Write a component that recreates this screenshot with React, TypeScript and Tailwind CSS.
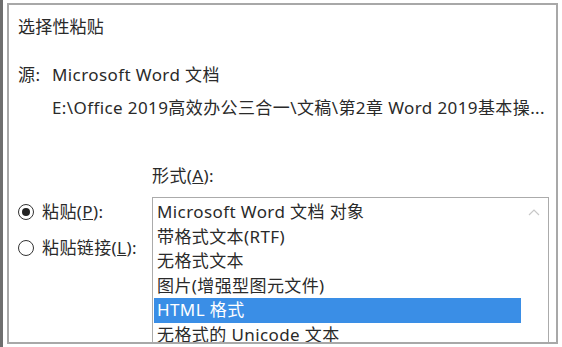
const font = { fontFamily: '"Noto Sans", "Noto Sans CJK SC", sans-serif' };

const formats = [
  'Microsoft Word 文档 对象',
  '带格式文本(RTF)',
  '无格式文本',
  '图片(增强型图元文件)',
  'HTML 格式',
  '无格式的 Unicode 文本',
];

function Radio({ checked, label, hotkey }: { checked: boolean; label: string; hotkey: string }) {
  return (
    <div className="flex items-center gap-[8px]">
      <span className="flex h-[16px] w-[16px] items-center justify-center rounded-full border border-[#333]">
        {checked ? <span className="h-[8px] w-[8px] rounded-full bg-[#222]" /> : null}
      </span>
      <span>
        {label}(<span className="underline">{hotkey}</span>):
      </span>
    </div>
  );
}

export default function App() {
  return (
    <div
      className="flex h-[347px] w-[562px] overflow-hidden border-l-[3px] border-[#6e6e6e] bg-white pb-[3px] pl-[4px] pr-[4px] pt-[3px] text-[17px] tracking-[0.4px] text-[#2a2a2a]"
      style={font}
    >
      <div className="flex flex-1 flex-col overflow-hidden border-2 border-[#a8a8a8] pl-[9px] pr-[6px]">
        <div className="mt-[11px] leading-[22px] tracking-[0.2px]">选择性粘贴</div>

        <div className="mt-[26px] flex leading-[22px]">
          <span className="w-[34px]">源:</span>
          <div className="flex min-w-0 flex-1 flex-col gap-[11px]">
            <span>Microsoft Word 文档</span>
            <span className="whitespace-nowrap">E:\Office 2019高效办公三合一\文稿\第2章 Word 2019基本操...</span>
          </div>
        </div>

        <div className="mt-[46px] flex">
          <div className="mt-[36px] flex w-[134px] flex-col gap-[14px] leading-[22px]">
            <Radio checked label="粘贴" hotkey="P" />
            <Radio checked={false} label="粘贴链接" hotkey="L" />
          </div>
          <div className="flex flex-1 flex-col">
            <div className="leading-[22px]">
              形式(<span className="underline">A</span>):
            </div>
            <div className="relative mt-[10px] mr-[1px] h-[160px] border border-[#ababab] px-[1px] pt-[2px]">
              <svg
                className="absolute right-[8px] top-[10px]"
                width="12"
                height="8"
                viewBox="0 0 12 8"
                fill="none"
                stroke="#c8c8c8"
                strokeWidth="1.2"
              >
                <path d="M1 7 L6 2 L11 7" />
              </svg>
              {formats.map((f, i) => (
                <div
                  key={f}
                  className={`mr-[26px] h-[24.5px] pl-[3px] leading-[24px] ${
                    i === 4 ? 'bg-[#3a8ee6] text-white' : ''
                  }`}
                >
                  {f}
                </div>
              ))}
            </div>
          </div>
        </div>
      </div>
    </div>
  );
}
